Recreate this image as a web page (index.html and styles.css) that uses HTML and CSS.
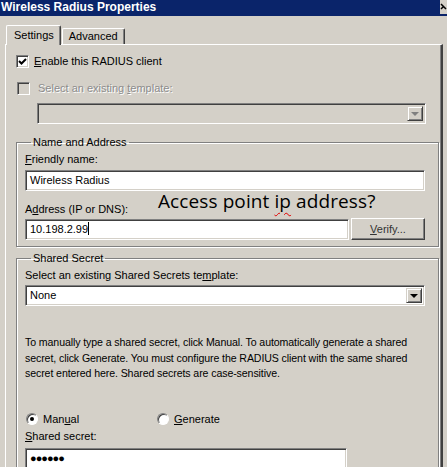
FILE: index.html
```html
<!DOCTYPE html>
<html lang="en">
<head>
    <meta charset="UTF-8">
    <title>Wireless Radius Properties</title>
    <link rel="stylesheet" href="styles.css">
</head>
<body>
    <div class="window">
        <div class="titlebar">
            <span>Wireless Radius Properties</span>
            <span class="close">
                <svg width="7" height="14" viewBox="0 0 7 14"><path d="M1 4 L6 9 M1 9 L3 7" stroke="#000" stroke-width="1.5" fill="none"/></svg>
            </span>
        </div>

        <div class="tabs">
            <div class="tab active">Settings</div>
            <div class="tab">Advanced</div>
        </div>

        <div class="panel">
            <div class="check-row">
                <span class="checkbox checked">
                    <svg width="9" height="9" viewBox="0 0 9 9"><path d="M1 4 L3.5 6.5 L8 2" fill="none" stroke="#000" stroke-width="2"/></svg>
                </span>
                <span><u>E</u>nable this RADIUS client</span>
            </div>
            <div class="check-row disabled second">
                <span class="checkbox"></span>
                <span>Select an existing <u>t</u>emplate:</span>
            </div>
            <div class="combo combo-disabled">
                <span class="combo-text"></span>
                <span class="drop-btn"><span class="arrow"></span></span>
            </div>

            <fieldset class="group group-address">
                <legend>Name and Address</legend>
                <div class="label label-first"><u>F</u>riendly name:</div>
                <div class="textbox">Wireless Radius</div>
                <div class="label label-address">
                    A<u>d</u>dress (IP or DNS):
                    <span class="callout">Access point <span class="misspelled">ip</span> address?</span>
                </div>
                <div class="address-row">
                    <div class="textbox address-box">10.198.2.99<span class="caret"></span></div>
                    <div class="button"><u>V</u>erify...</div>
                </div>
            </fieldset>

            <fieldset class="group group-secret">
                <legend>Shared Secret</legend>
                <div class="label label-first">Select an existing Shared Secrets te<u>m</u>plate:</div>
                <div class="combo">
                    <span class="combo-text">None</span>
                    <span class="drop-btn"><span class="arrow"></span></span>
                </div>
                <p class="hint">To manually type a shared secret, click Manual. To automatically generate a shared secret, click Generate. You must configure the RADIUS client with the same shared secret entered here. Shared secrets are case-sensitive.</p>
                <div class="radio-row">
                    <label class="radio-item manual"><span class="radio checked"></span><span>Man<u>u</u>al</span></label>
                    <label class="radio-item"><span class="radio"></span><span><u>G</u>enerate</span></label>
                </div>
                <div class="label label-secret"><u>S</u>hared secret:</div>
                <div class="textbox secret-box">&#9679;&#9679;&#9679;&#9679;&#9679;&#9679;</div>
            </fieldset>
        </div>
    </div>
</body>
</html>
```

FILE: styles.css
```css
body {
    margin: 0;
    background-color: #d4d0c8;
    font-family: "Liberation Sans", Arial, sans-serif;
    font-size: 11px;
    color: #000;
    overflow: hidden;
}

u {
    text-decoration: underline;
    text-underline-offset: 1px;
}

.window {
    width: 447px;
    height: 467px;
    overflow: hidden;
}

.titlebar {
    height: 16px;
    background-color: #0a246a;
    color: #fff;
    font-weight: bold;
    font-size: 12px;
    line-height: 15px;
    padding-left: 1px;
    display: flex;
    justify-content: space-between;
}

.close {
    width: 7px;
    height: 14px;
    background-color: #d4d0c8;
    display: flex;
}

.tabs {
    display: flex;
    align-items: flex-end;
    margin-top: 9px;
    padding-left: 6px;
    height: 19px;
}

.tab {
    height: 15px;
    line-height: 15px;
    padding: 0 6px;
    border-top: 1px solid #fff;
    border-left: 1px solid #fff;
    border-right: 1px solid #404040;
    box-shadow: inset -1px 0 0 #808080;
    margin-left: 1px;
    border-radius: 2px 2px 0 0;
}

.tab.active {
    height: 19px;
    line-height: 18px;
    margin-left: 0;
    padding: 0 6px 0 7px;
    position: relative;
    margin-bottom: -1px;
    background-color: #d4d0c8;
    z-index: 1;
}

.panel {
    margin-left: 5px;
    width: 422px;
    height: 430px;
    padding: 10px 3px 0 10px;
    border-top: 1px solid #fff;
    border-left: 1px solid #fff;
    border-right: 2px solid #404040;
    box-shadow: inset -1px 0 0 #808080;
}

.check-row {
    display: flex;
    align-items: center;
    gap: 5px;
    height: 13px;
    line-height: 13px;
}

.check-row.second {
    margin-top: 14px;
    gap: 8px;
    margin-left: 1px;
}

.disabled {
    color: #8c8c8c;
    text-shadow: 1px 1px 0 #fff;
}

.checkbox {
    width: 9px;
    height: 9px;
    border-top: 1px solid #808080;
    border-left: 1px solid #808080;
    border-right: 1px solid #fff;
    border-bottom: 1px solid #fff;
    box-shadow: inset 1px 1px 0 #404040, inset -1px -1px 0 #d4d0c8;
    padding: 1px;
    background-color: #fff;
    display: flex;
    align-items: center;
    justify-content: center;
}

.disabled .checkbox {
    background-color: #d4d0c8;
}

.combo {
    display: flex;
    height: 15px;
    background-color: #fff;
    border-top: 1px solid #808080;
    border-left: 1px solid #808080;
    border-right: 1px solid #fff;
    border-bottom: 1px solid #fff;
    box-shadow: inset 1px 1px 0 #404040, inset -1px -1px 0 #d4d0c8;
    padding: 2px;
    margin-top: 3px;
}

.combo-disabled {
    background-color: #d4d0c8;
    margin: 8px 0 0 21px;
    width: 383px;
}

.combo-text {
    flex: 1;
    line-height: 15px;
    padding-left: 2px;
}

.drop-btn {
    width: 12px;
    height: 11px;
    background-color: #d4d0c8;
    border-top: 1px solid #d4d0c8;
    border-left: 1px solid #d4d0c8;
    border-right: 1px solid #404040;
    border-bottom: 1px solid #404040;
    box-shadow: inset 1px 1px 0 #fff, inset -1px -1px 0 #808080;
    padding: 1px;
    display: flex;
    align-items: center;
    justify-content: center;
}

.arrow {
    width: 0;
    height: 0;
    border-left: 4px solid transparent;
    border-right: 4px solid transparent;
    border-top: 4px solid #000;
}

.combo-disabled .arrow {
    border-top-color: #808080;
}

.group {
    margin: 12px 0 0 0;
    padding: 0 13px 6px 8px;
    width: 400px;
    border: 1px solid #808080;
    box-shadow: inset 1px 1px 0 #fff, 1px 1px 0 #fff;
}

.group legend {
    padding: 0 2px;
    margin-left: 6px;
    line-height: 13px;
}

.group-secret {
    margin-top: 5px;
    height: 300px;
}

.label {
    line-height: 13px;
}

.label-first {
    margin-top: 4px;
}

.label-address {
    margin-top: 12px;
    position: relative;
}

.callout {
    position: absolute;
    left: 133px;
    top: -8px;
    font-family: "Open Sans", sans-serif;
    font-size: 19px;
    letter-spacing: 0.1px;
    white-space: nowrap;
}

.misspelled {
    text-decoration: underline wavy #e00000;
    text-decoration-thickness: 1px;
    text-underline-offset: 4px;
}

.textbox {
    height: 15px;
    line-height: 15px;
    padding: 2px 4px;
    margin-top: 4px;
    background-color: #fff;
    border-top: 1px solid #808080;
    border-left: 1px solid #808080;
    border-right: 1px solid #fff;
    border-bottom: 1px solid #fff;
    box-shadow: inset 1px 1px 0 #404040, inset -1px -1px 0 #d4d0c8;
}

.address-row {
    display: flex;
    align-items: center;
    gap: 2px;
    margin-top: 2px;
    height: 22px;
}

.address-box {
    margin-top: 0;
    flex: 1;
}

.caret {
    display: inline-block;
    width: 1px;
    height: 13px;
    background-color: #000;
    vertical-align: -2px;
}

.button {
    width: 72px;
    height: 20px;
    line-height: 20px;
    text-align: center;
    color: #333;
    border-top: 1px solid #fff;
    border-left: 1px solid #fff;
    border-right: 1px solid #404040;
    border-bottom: 1px solid #404040;
    box-shadow: inset -1px -1px 0 #808080;
}

.hint {
    margin: 29px 0 0 0;
    line-height: 15.5px;
    font-size: 10.6px;
    letter-spacing: -0.1px;
}

.radio-row {
    display: flex;
    align-items: center;
    height: 13px;
    margin-top: 31px;
    padding-left: 1px;
}

.radio-item {
    display: flex;
    align-items: center;
    gap: 5px;
}

.radio-item.manual {
    width: 131px;
}

.radio {
    width: 10px;
    height: 10px;
    border-radius: 50%;
    background-color: #fff;
    border: 1px solid;
    border-color: #808080 #fff #fff #808080;
    box-shadow: inset 1px 1px 0 #404040;
    display: flex;
    align-items: center;
    justify-content: center;
}

.radio.checked::after {
    content: "";
    width: 4px;
    height: 4px;
    border-radius: 50%;
    background-color: #000;
}

.label-secret {
    margin-top: 4px;
}

.secret-box {
    width: 312px;
    margin-top: 5px;
    font-size: 11px;
    letter-spacing: -1px;
}
```
